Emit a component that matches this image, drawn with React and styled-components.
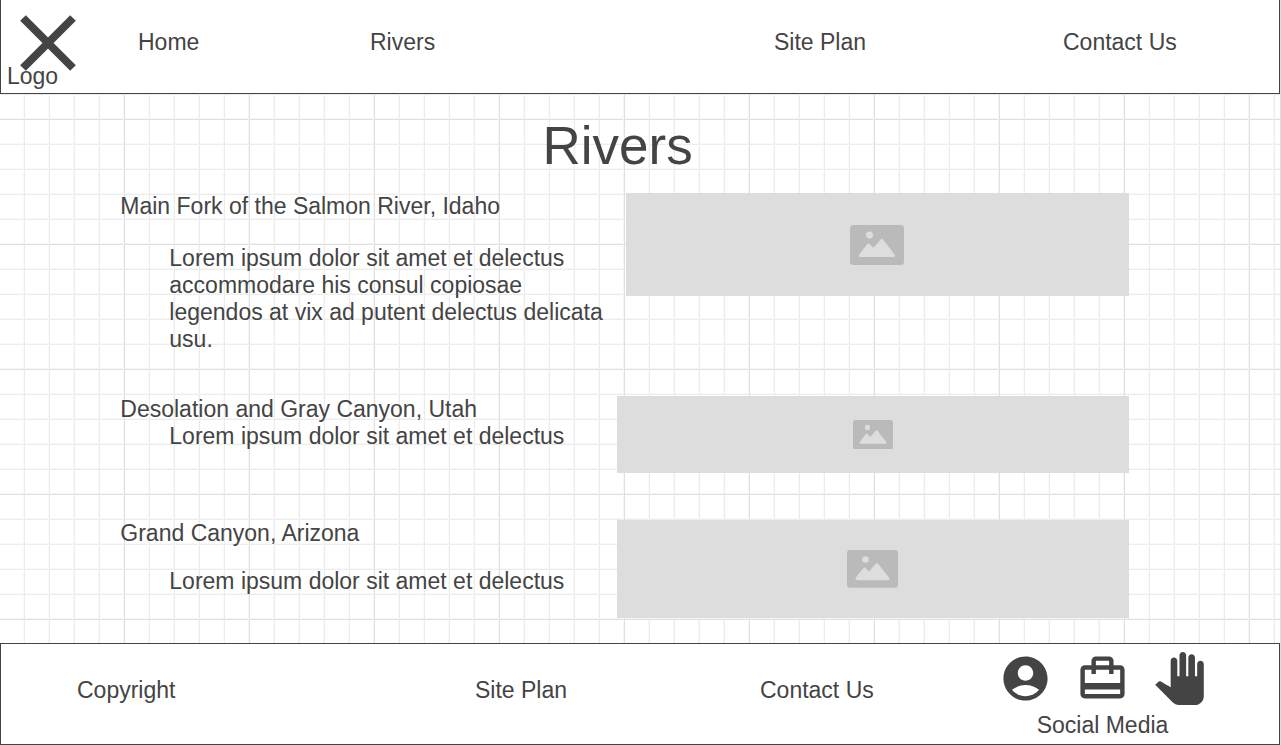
import React from "react";
import styled, { createGlobalStyle } from "styled-components";
import { MdAccountCircle, MdCardTravel, MdPanTool } from "react-icons/md";

const ink = "#444";

const GlobalStyle = createGlobalStyle`
  *, *::before, *::after { box-sizing: border-box; }
  body {
    margin: 0;
    background: #fff;
    color: ${ink};
    font-family: "Liberation Sans", Arial, sans-serif;
    font-size: 23px;
    line-height: 27px;
  }
  h1, h2, p { margin: 0; font-weight: 400; }
`;

const Page = styled.div`
  min-height: 100vh;
  display: flex;
  flex-direction: column;
  border-right: 1px solid #ddd;
`;

const Header = styled.header`
  min-height: 94px;
  display: grid;
  grid-template-columns: 137fr 1141fr;
  background: #fff;
  border: 1px solid ${ink};
  border-top: 0;
`;

const Logo = styled.a`
  display: flex;
  flex-direction: column;
  align-items: flex-start;
  padding: 15px 0 0 6px;
  color: inherit;
  text-decoration: none;

  svg {
    width: 56px;
    height: 56px;
    margin-left: 13px;
  }

  span { margin-top: -8px; }
`;

const Nav = styled.nav`
  display: grid;
  grid-template-columns: ${({ $columns }) => $columns};
  align-items: center;
`;

const HeaderNav = styled(Nav)`
  padding-bottom: 8px;
`;

const NavLink = styled.a`
  justify-self: start;
  color: inherit;
  text-decoration: none;
  white-space: nowrap;
`;

const Main = styled.main`
  flex: 1;
  padding: 24px 11.8% 24px 9.4%;
  background-color: #fff;
  background-image:
    linear-gradient(to right, #f6f6f6 1px, #e0e0e0 1px 2px, transparent 2px),
    linear-gradient(to bottom, #f6f6f6 1px, #e0e0e0 1px 2px, transparent 2px),
    linear-gradient(to right, #f9f9f9 1px, #ececec 1px 2px, transparent 2px),
    linear-gradient(to bottom, #f9f9f9 1px, #ececec 1px 2px, transparent 2px);
  background-size: 125px 125px, 125px 125px, 25px 25px, 25px 25px;
  background-position: 123px 0, 0 24px, 23px 0, 0 -1px;
`;

const Title = styled.h1`
  padding-right: 14px;
  margin-bottom: 19px;
  font-size: 53px;
  line-height: 56px;
  text-align: center;
`;

const River = styled.section`
  display: grid;
  grid-template-columns: ${({ $columns }) => $columns};
  align-items: start;
  margin-bottom: ${({ $after }) => $after}px;
`;

const RiverText = styled.div`
  display: grid;
  gap: ${({ $gap }) => $gap}px;
  padding-right: 16px;
`;

const RiverName = styled.h2`
  font-size: 23px;
`;

const RiverNote = styled.p`
  padding-left: 49px;
`;

const Placeholder = styled.div`
  height: ${({ $height }) => $height}px;
  display: grid;
  place-items: center;
  background: #ddd;

  svg {
    width: ${({ $icon }) => $icon}px;
    height: auto;
  }
`;

const Footer = styled.footer`
  min-height: 102px;
  display: grid;
  grid-template-columns: 920fr 358fr;
  background: #fff;
  border: 1px solid ${ink};
`;

const FooterNav = styled(Nav)`
  padding: 0 0 8px 76px;
`;

const Social = styled.div`
  display: flex;
  flex-direction: column;
  align-items: center;
  gap: 7px;
  padding: 8px 0 5px 5px;
`;

const SocialLinks = styled.div`
  display: flex;
  gap: 24px;
`;

const IconLink = styled.a`
  display: flex;
  color: inherit;
  font-size: 53px;
`;

function PictureIcon() {
  return (
    <svg viewBox="0 0 54 40" aria-hidden="true">
      <rect width="54" height="40" rx="3.5" fill="#bababa" />
      <circle cx="19.5" cy="10" r="3.5" fill="#ddd" />
      <path
        d="M9.4 29.2 L17.2 19.2 Q18.4 17.8 19.8 19.2 L23.4 22.8 L30.6 14.4 Q31.8 13.2 33 14.6 L44.6 29.4 Q46 32 43.4 32 H10.6 Q8 32 9.4 29.2Z"
        fill="#ddd"
      />
    </svg>
  );
}

const lorem = "Lorem ipsum dolor sit amet et delectus";

const rivers = [
  {
    name: "Main Fork of the Salmon River, Idaho",
    text: `${lorem} accommodare his consul copiosae legendos at vix ad putent delectus delicata usu.`,
    columns: "505fr 503fr",
    gap: 25,
    height: 103,
    icon: 54,
    after: 43,
  },
  {
    name: "Desolation and Gray Canyon, Utah",
    text: lorem,
    columns: "496fr 512fr",
    gap: 0,
    height: 77,
    icon: 40,
    after: 47,
  },
  {
    name: "Grand Canyon, Arizona",
    text: lorem,
    columns: "496fr 512fr",
    gap: 21,
    height: 98,
    icon: 51,
    after: 0,
  },
];

export default function App() {
  return (
    <Page>
      <GlobalStyle />
      <Header>
        <Logo href="#home">
          <svg viewBox="0 0 56 56" aria-hidden="true">
            <path d="M3 3 53 53M53 3 3 53" stroke={ink} strokeWidth="8" />
          </svg>
          <span>Logo</span>
        </Logo>
        <HeaderNav aria-label="Main" $columns="232fr 404fr 289fr 216fr">
          <NavLink href="#home">Home</NavLink>
          <NavLink href="#rivers">Rivers</NavLink>
          <NavLink href="#site-plan">Site Plan</NavLink>
          <NavLink href="#contact">Contact Us</NavLink>
        </HeaderNav>
      </Header>
      <Main>
        <Title>Rivers</Title>
        {rivers.map((river) => (
          <River key={river.name} $columns={river.columns} $after={river.after}>
            <RiverText $gap={river.gap}>
              <RiverName>{river.name}</RiverName>
              <RiverNote>{river.text}</RiverNote>
            </RiverText>
            <Placeholder $height={river.height} $icon={river.icon}>
              <PictureIcon />
            </Placeholder>
          </River>
        ))}
      </Main>
      <Footer>
        <FooterNav aria-label="Footer" $columns="398fr 285fr 161fr">
          <span>Copyright</span>
          <NavLink href="#site-plan">Site Plan</NavLink>
          <NavLink href="#contact">Contact Us</NavLink>
        </FooterNav>
        <Social>
          <SocialLinks>
            <IconLink href="#account" aria-label="Account">
              <MdAccountCircle />
            </IconLink>
            <IconLink href="#travel" aria-label="Travel">
              <MdCardTravel />
            </IconLink>
            <IconLink href="#wave" aria-label="Wave">
              <MdPanTool />
            </IconLink>
          </SocialLinks>
          <span>Social Media</span>
        </Social>
      </Footer>
    </Page>
  );
}
